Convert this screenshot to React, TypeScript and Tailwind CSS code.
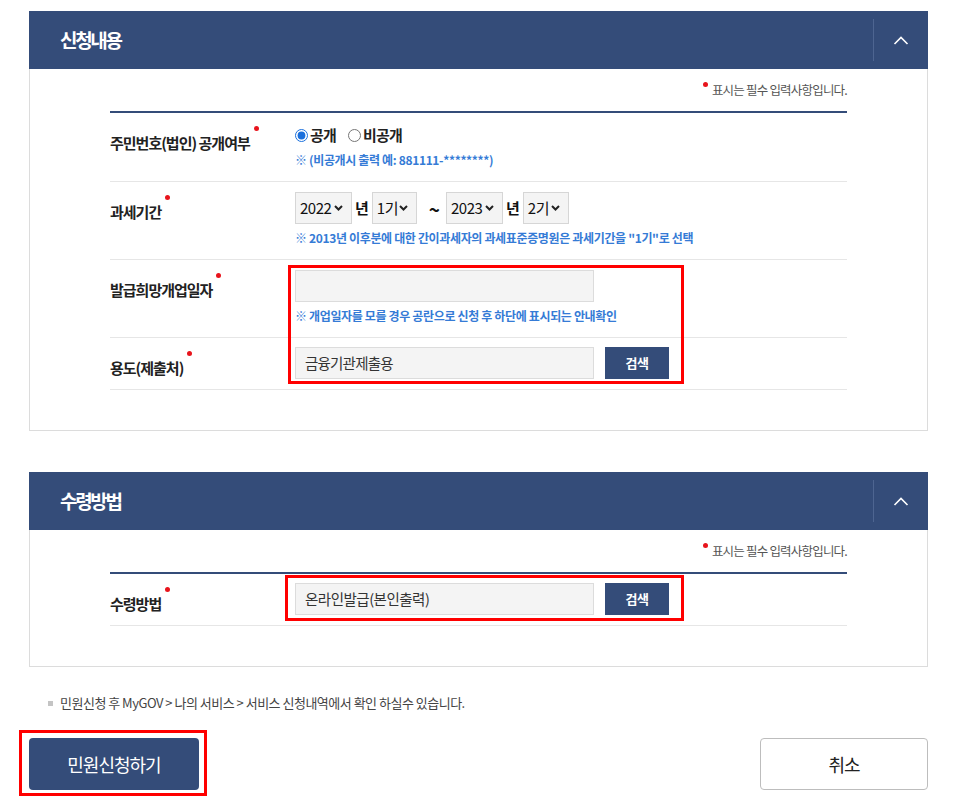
import React from "react";

const FONT = { fontFamily: "'Noto Sans CJK KR', 'Noto Sans', sans-serif" };

function Dot({ className }: { className: string }) {
  return <span className={"absolute w-[5px] h-[5px] rounded-full bg-[#e8141c] " + className} />;
}

function Label({ children }: { children: React.ReactNode }) {
  return (
    <div className="w-[185px] shrink-0 pt-[17px]">
      <span className="relative text-[15px] font-bold leading-[20px] text-[#222] tracking-[-1px]">
        {children}
        <Dot className="-right-[9px] -top-[6px]" />
      </span>
    </div>
  );
}

function Header({ title }: { title: string }) {
  return (
    <div className="h-[58px] bg-[#344c79] flex items-center justify-between pl-[31px]">
      <span className="text-white text-[19px] font-bold tracking-[-2.3px]">{title}</span>
      <div className="flex items-center h-full">
        <div className="w-px h-[42px] bg-[#4e6591]" />
        <div className="w-[54px] flex justify-center">
          <svg width="16" height="9" viewBox="0 0 16 9" fill="none">
            <polyline points="1.5,8 8,1.5 14.5,8" stroke="white" strokeWidth="1.6" />
          </svg>
        </div>
      </div>
    </div>
  );
}

function Required() {
  return (
    <div className="flex justify-end mb-[12px]">
      <span className="relative text-[12.5px] leading-[18px] text-[#555] tracking-[-0.8px]">
        표시는 필수 입력사항입니다.
        <Dot className="-left-[9px] top-[1px]" />
      </span>
    </div>
  );
}

function Chevron() {
  return (
    <svg width="9" height="6" viewBox="0 0 9 6" fill="none">
      <polyline points="1,1 4.5,4.5 8,1" stroke="#222" strokeWidth="2" />
    </svg>
  );
}

function Note({ children, className = "" }: { children: React.ReactNode; className?: string }) {
  return (
    <div className={"text-[12px] font-bold leading-[18px] text-[#357bd6] tracking-[-0.35px] " + className}>
      {children}
    </div>
  );
}

function SearchButton() {
  return (
    <div className="w-[64px] h-[32px] bg-[#344c79] text-white text-[13px] font-bold flex items-center justify-center tracking-[-0.5px]">
      검색
    </div>
  );
}

function Select({ value, w }: { value: string; w: string }) {
  return (
    <div className={w + " h-[32px] border border-[#d6d6d6] bg-[#f4f4f4] flex items-center justify-between pl-[4px] pr-[8px]"}>
      <span className="tracking-[-0.5px]">{value}</span>
      <Chevron />
    </div>
  );
}

export default function App() {
  return (
    <div className="w-[957px] min-h-[809px] bg-white px-[29px] pt-[11px]" style={FONT}>
      {/* Section 1 */}
      <Header title="신청내용" />
      <div className="border border-t-0 border-[#dcdcdc] px-[80px] pt-[12px] pb-[40px]">
        <Required />
        <div className="relative border-t-2 border-[#344c79]">
          {/* Row 1 */}
          <div className="flex border-b border-[#e6e6e6]">
            <Label>주민번호(법인) 공개여부</Label>
            <div className="pt-[10px] pb-[12px]">
              <div className="h-[24px] flex items-center text-[15px] font-bold text-[#222] tracking-[-0.8px]">
                <input type="radio" name="pub" defaultChecked className="m-0 w-[13px] h-[13px] accent-[#1a6fdc]" />
                <span className="ml-[2px]">공개</span>
                <input type="radio" name="pub" className="m-0 ml-[12px] w-[13px] h-[13px]" />
                <span className="ml-[2px]">비공개</span>
              </div>
              <Note className="mt-[4px]">※ (비공개시 출력 예: 881111-********)</Note>
            </div>
          </div>
          {/* Row 2 */}
          <div className="flex border-b border-[#e6e6e6]">
            <Label>과세기간</Label>
            <div className="pt-[10px] pb-[12px]">
              <div className="flex items-center h-[32px] text-[15px] text-[#111]">
                <Select value="2022" w="w-[57px]" />
                <span className="mx-[3px] font-bold">년</span>
                <Select value="1기" w="w-[45px]" />
                <span className="ml-[12px] mr-[6px] font-bold text-[19px] leading-none">~</span>
                <Select value="2023" w="w-[57px]" />
                <span className="mx-[3px] font-bold">년</span>
                <Select value="2기" w="w-[46px]" />
              </div>
              <Note className="mt-[5px]">
                ※ 2013년 이후분에 대한 간이과세자의 과세표준증명원은 과세기간을 "1기"로 선택
              </Note>
            </div>
          </div>
          {/* Row 3 */}
          <div className="flex border-b border-[#e6e6e6]">
            <Label>발급희망개업일자</Label>
            <div className="pt-[10px] pb-[12px]">
              <div className="w-[299px] h-[32px] border border-[#dcdcdc] bg-[#f4f4f4]" />
              <Note className="mt-[5px]">※ 개업일자를 모를 경우 공란으로 신청 후 하단에 표시되는 안내확인</Note>
            </div>
          </div>
          {/* Row 4 */}
          <div className="flex border-b border-[#e6e6e6]">
            <Label>용도(제출처)</Label>
            <div className="pt-[9px] pb-[10px] flex gap-[11px]">
              <div className="w-[299px] h-[32px] border border-[#dcdcdc] bg-[#f4f4f4] flex items-center pl-[9px] text-[14.5px] text-[#333] tracking-[-0.8px]">
                금융기관제출용
              </div>
              <SearchButton />
            </div>
          </div>
          <div className="absolute left-[178px] top-[152px] w-[396px] h-[119px] border-[3px] border-[#ff0000] pointer-events-none" />
        </div>
      </div>

      {/* Section 2 */}
      <div className="mt-[41px]">
        <Header title="수령방법" />
        <div className="border border-t-0 border-[#dcdcdc] px-[80px] pt-[12px] pb-[40px]">
          <Required />
          <div className="relative border-t-2 border-[#344c79]">
            <div className="flex border-b border-[#e6e6e6]">
              <Label>수령방법</Label>
              <div className="pt-[9px] pb-[10px] flex gap-[11px]">
                <div className="w-[299px] h-[32px] border border-[#dcdcdc] bg-[#f4f4f4] flex items-center pl-[9px] text-[14.5px] text-[#333] tracking-[-0.5px]">
                  온라인발급(본인출력)
                </div>
                <SearchButton />
              </div>
            </div>
            <div className="absolute left-[175px] top-[1px] w-[399px] h-[46px] border-[3px] border-[#ff0000] pointer-events-none" />
          </div>
        </div>
      </div>

      {/* Footer note */}
      <div className="mt-[27px] pl-[19px] flex items-center gap-[7px] h-[18px]">
        <span className="w-[5px] h-[5px] bg-[#c4c4c4]" />
        <span className="text-[13px] text-[#444] tracking-[-0.5px] leading-[18px]">
          민원신청 후 MyGOV &gt; 나의 서비스 &gt; 서비스 신청내역에서 확인 하실수 있습니다.
        </span>
      </div>

      {/* Buttons */}
      <div className="mt-[26px] flex justify-between pb-[20px]">
        <div className="relative">
          <div className="w-[170px] h-[52px] rounded-[4px] bg-[#344c79] text-white text-[18px] tracking-[-1px] flex items-center justify-center">
            민원신청하기
          </div>
          <div className="absolute -left-[10px] -top-[8px] w-[188px] h-[66px] border-[3px] border-[#ff0000] pointer-events-none" />
        </div>
        <div className="w-[168px] h-[52px] rounded-[4px] border border-[#bdbdbd] bg-white text-[#222] text-[18px] tracking-[-1px] flex items-center justify-center">
          취소
        </div>
      </div>
    </div>
  );
}
